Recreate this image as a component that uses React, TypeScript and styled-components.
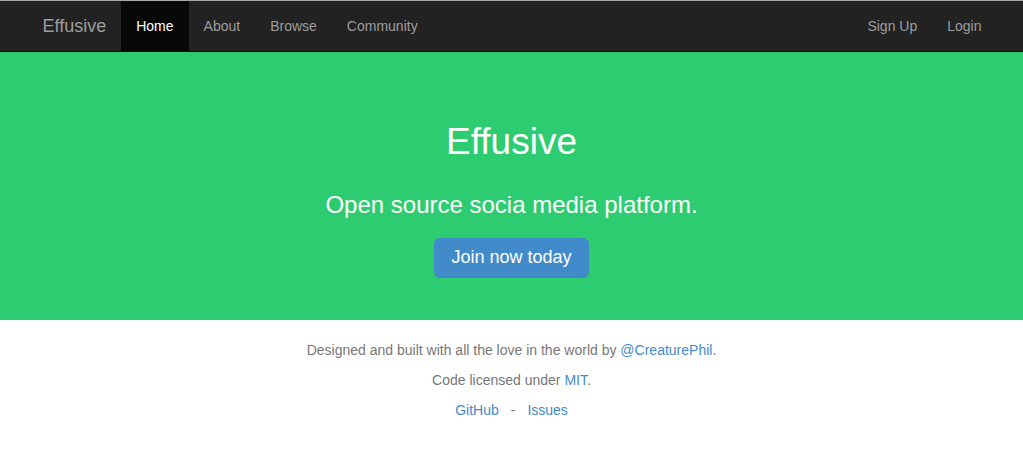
import React from "react";
import styled, { createGlobalStyle } from "styled-components";

const Global = createGlobalStyle`
  * { box-sizing: border-box; }
  html, body { margin: 0; padding: 0; background: #fff; }
  body {
    font-family: "Liberation Sans", Arial, Helvetica, sans-serif;
    font-size: 14px;
    line-height: 1.428571429;
    color: #333;
    border-top: 1px solid #a9a9a9;
  }
`;

const Navbar = styled.nav`
  background: #222;
  border-bottom: 1px solid #080808;
  height: 51px;
`;

const NavContainer = styled.div`
  width: 970px;
  margin: 0 auto;
  padding: 0 15px;
  display: flex;
  align-items: stretch;
  height: 50px;
`;

const Brand = styled.a`
  margin-left: -14px;
  padding: 15px;
  font-size: 18px;
  line-height: 20px;
  color: #9d9d9d;
  text-decoration: none;
`;

const NavList = styled.ul<{ $right?: boolean }>`
  list-style: none;
  margin: 0;
  padding: 0;
  display: flex;
  margin-left: ${(p) => (p.$right ? "auto" : "0")};
  margin-right: ${(p) => (p.$right ? "-15px" : "0")};
`;

const NavLink = styled.a<{ $active?: boolean }>`
  display: block;
  padding: 15px;
  line-height: 20px;
  height: 51px;
  font-size: 14px;
  text-decoration: none;
  color: ${(p) => (p.$active ? "#fff" : "#9d9d9d")};
  background: ${(p) => (p.$active ? "#080808" : "transparent")};
`;

const Jumbotron = styled.section`
  background: #2ecc71;
  height: 268px;
  display: flex;
  flex-direction: column;
  align-items: center;
  color: #fff;
  padding-top: 66px;
`;

const Title = styled.h1`
  margin: 0;
  font-size: 37px;
  font-weight: 400;
  line-height: 48px;
`;

const Tagline = styled.h3`
  margin: 24px 0 0;
  font-size: 24px;
  font-weight: 400;
  line-height: 30px;
`;

const JoinButton = styled.a`
  margin-top: 18px;
  display: inline-flex;
  align-items: center;
  height: 40px;
  padding: 0 16px;
  font-size: 18px;
  color: #fff;
  background: #428bca;
  border: 1px solid #3f87c6;
  border-radius: 6px;
  text-decoration: none;
`;

const Footer = styled.footer`
  display: flex;
  flex-direction: column;
  align-items: center;
  gap: 10px;
  padding-top: 20px;
  color: #777;
`;

const FootLine = styled.p`
  margin: 0;
  line-height: 20px;
`;

const Link = styled.a`
  color: #428bca;
  text-decoration: none;
`;

const Sep = styled.span`
  margin: 0 12px;
`;

export default function App() {
  return (
    <>
      <Global />
      <Navbar>
        <NavContainer>
          <Brand href="#">Effusive</Brand>
          <NavList>
            <li><NavLink $active href="#">Home</NavLink></li>
            <li><NavLink href="#">About</NavLink></li>
            <li><NavLink href="#">Browse</NavLink></li>
            <li><NavLink href="#">Community</NavLink></li>
          </NavList>
          <NavList $right>
            <li><NavLink href="#">Sign Up</NavLink></li>
            <li><NavLink href="#">Login</NavLink></li>
          </NavList>
        </NavContainer>
      </Navbar>
      <Jumbotron>
        <Title>Effusive</Title>
        <Tagline>Open source socia media platform.</Tagline>
        <JoinButton href="#">Join now today</JoinButton>
      </Jumbotron>
      <Footer>
        <FootLine>
          Designed and built with all the love in the world by <Link href="#">@CreaturePhil</Link>.
        </FootLine>
        <FootLine>
          Code licensed under <Link href="#">MIT</Link>.
        </FootLine>
        <FootLine>
          <Link href="#">GitHub</Link>
          <Sep>-</Sep>
          <Link href="#">Issues</Link>
        </FootLine>
      </Footer>
    </>
  );
}
